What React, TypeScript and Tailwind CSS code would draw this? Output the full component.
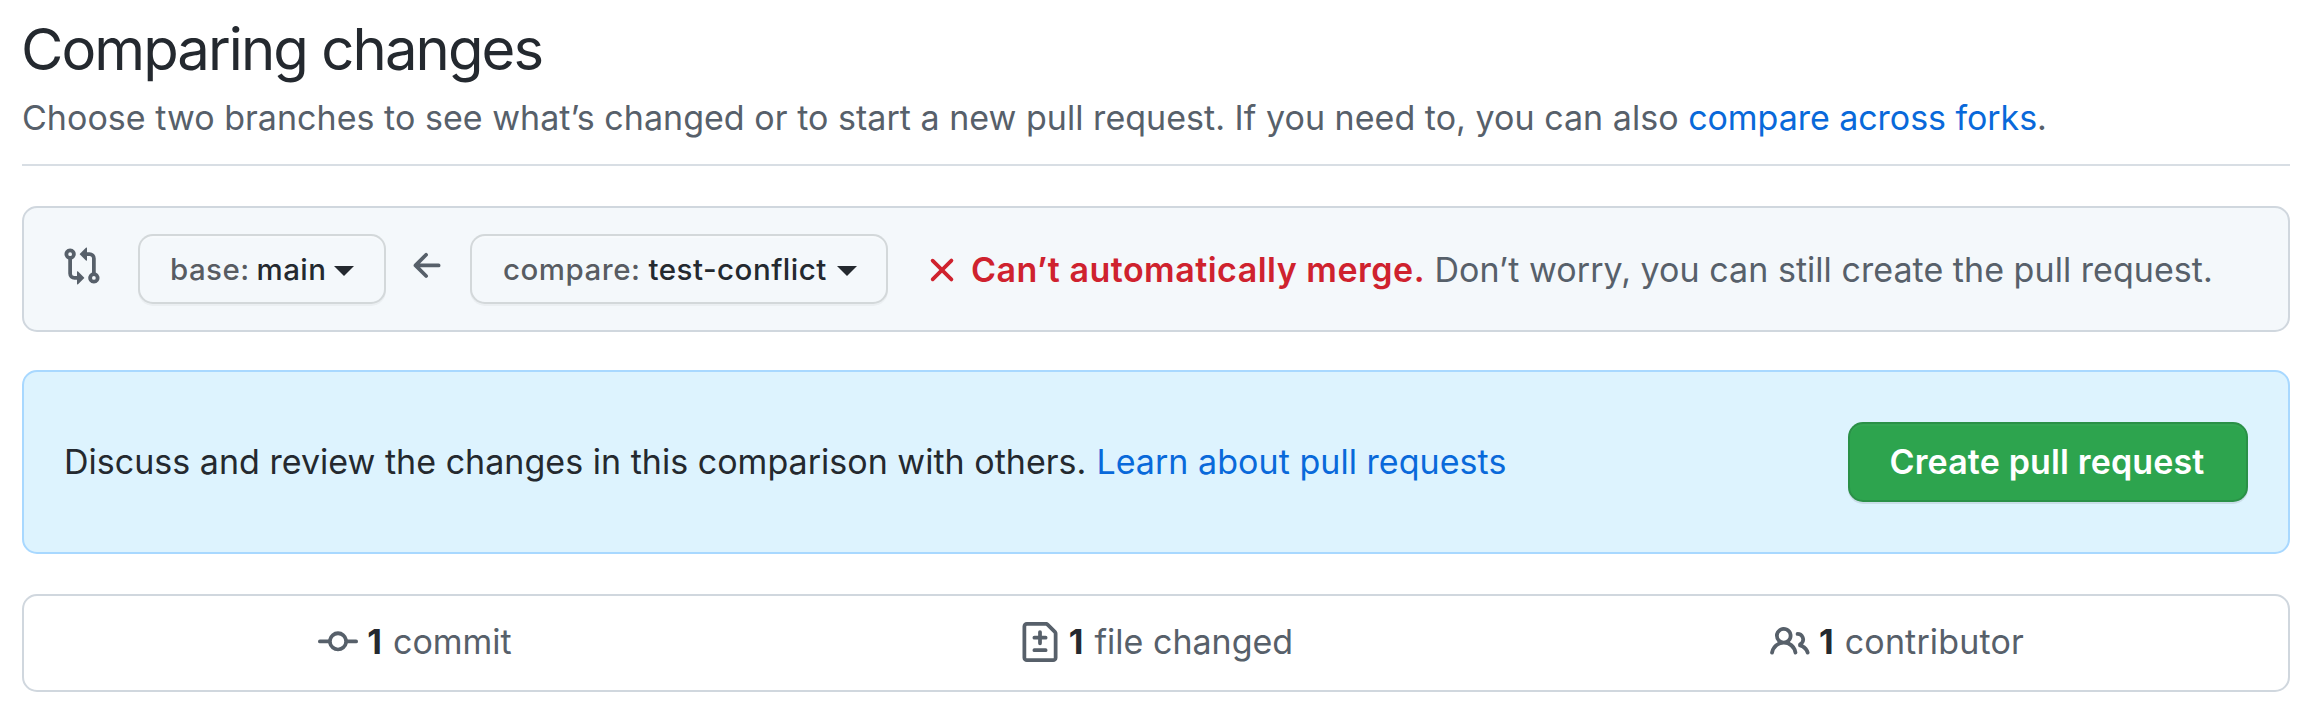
import type { ReactNode } from "react";

const paths = {
  compare:
    "M9.573.677L7.177 3.073a.25.25 0 000 .354l2.396 2.396A.25.25 0 0010 5.646V4h1a1 1 0 011 1v5.628a2.251 2.251 0 101.5 0V5A2.5 2.5 0 0011 2.5h-1V.854a.25.25 0 00-.427-.177zM6 12v-1.646a.25.25 0 01.427-.177l2.396 2.396a.25.25 0 010 .354l-2.396 2.396A.25.25 0 016 15.146V13.5H5A2.5 2.5 0 012.5 11V5.372a2.25 2.25 0 111.5 0V11a1 1 0 001 1h1zM4 3.25a.75.75 0 11-1.5 0 .75.75 0 011.5 0zM12.75 12a.75.75 0 100 1.5.75.75 0 000-1.5z",
  arrowLeft:
    "M7.78 12.53a.75.75 0 01-1.06 0L2.47 8.28a.75.75 0 010-1.06l4.25-4.25a.75.75 0 011.06 1.06L4.81 7h7.44a.75.75 0 010 1.5H4.81l2.97 2.97a.75.75 0 010 1.06z",
  x: "M3.72 3.72a.75.75 0 011.06 0L8 6.94l3.22-3.22a.75.75 0 111.06 1.06L9.06 8l3.22 3.22a.75.75 0 11-1.06 1.06L8 9.06l-3.22 3.22a.75.75 0 01-1.06-1.06L6.94 8 3.72 4.78a.75.75 0 010-1.06z",
  commit:
    "M10.5 7.75a2.5 2.5 0 11-5 0 2.5 2.5 0 015 0zm1.43.75a4.002 4.002 0 01-7.86 0H.75a.75.75 0 110-1.5h3.32a4.001 4.001 0 017.86 0h3.32a.75.75 0 110 1.5h-3.32z",
  fileDiff:
    "M2.75 1.5a.25.25 0 00-.25.25v12.5c0 .138.112.25.25.25h10.5a.25.25 0 00.25-.25V4.664a.25.25 0 00-.073-.177l-2.914-2.914a.25.25 0 00-.177-.073H2.75zM1 1.75C1 .784 1.784 0 2.75 0h7.586c.464 0 .909.184 1.237.513l2.914 2.914c.329.328.513.773.513 1.237v9.586A1.75 1.75 0 0113.25 16H2.75A1.75 1.75 0 011 14.25V1.75zm7 1.5a.75.75 0 01.75.75v1.5h1.5a.75.75 0 010 1.5h-1.5v1.5a.75.75 0 01-1.5 0V7h-1.5a.75.75 0 010-1.5h1.5V4A.75.75 0 018 3.25zm-3 8a.75.75 0 01.75-.75h4.5a.75.75 0 010 1.5h-4.5a.75.75 0 01-.75-.75z",
  people:
    "M5.5 3.5a2 2 0 100 4 2 2 0 000-4zM2 5.5a3.5 3.5 0 115.898 2.549 5.507 5.507 0 013.034 4.084.75.75 0 11-1.482.235 4.001 4.001 0 00-7.9 0 .75.75 0 01-1.482-.236A5.507 5.507 0 013.102 8.05 3.49 3.49 0 012 5.5zM11 4a.75.75 0 100 1.5 1.5 1.5 0 01.666 2.844.75.75 0 00-.416.672v.352a.75.75 0 00.574.73c1.2.289 2.162 1.2 2.522 2.372a.75.75 0 101.434-.44 5.01 5.01 0 00-2.56-3.012A3 3 0 0011 4z",
};

function Icon({ name, className = "" }: { name: keyof typeof paths; className?: string }) {
  return (
    <svg viewBox="0 0 16 16" className={`size-10 shrink-0 ${className}`} fill="currentColor" fillRule="evenodd">
      <path d={paths[name]} />
    </svg>
  );
}

function Caret({ className }: { className: string }) {
  return (
    <svg viewBox="0 0 20 10" className={`mt-1 h-2.5 w-5 shrink-0 ${className}`} fill="currentColor">
      <path d="M0 0h20L10 10z" />
    </svg>
  );
}

function BranchButton({ className, children }: { className: string; children: ReactNode }) {
  return (
    <button
      className={`flex h-[70px] shrink-0 items-center rounded-[15px] border-2 border-[#1b1f24]/15 bg-[#f4f8fb] text-[29.5px] font-medium shadow-[0_2px_0_rgba(27,31,36,0.04),inset_0_2px_0_rgba(255,255,255,0.25)] ${className}`}
    >
      {children}
    </button>
  );
}

function Stat({
  icon,
  label,
  className,
  labelClass = "",
}: {
  icon: keyof typeof paths;
  label: string;
  className: string;
  labelClass?: string;
}) {
  return (
    <div className={`flex items-center justify-center ${className}`}>
      <Icon name={icon} />
      <span className="ml-[9px] font-bold text-[#24292f]">1</span>
      <span className={`ml-[11px] ${labelClass}`}>{label}</span>
    </div>
  );
}

export default function App() {
  return (
    <main className="h-[716px] bg-white pt-3 pr-4 pl-[22px] font-['Inter',sans-serif] text-[34px] leading-[52px] whitespace-nowrap text-[#57606a]">
      <header className="border-b-2 border-[#d8dee4] pb-5">
        <h1 className="-ml-px text-[58px] leading-[74px] tracking-[-1.92px] text-[#24292f]">Comparing changes</h1>
        <p className="mt-1.5 tracking-[0.03px]">
          Choose two branches to see what’s changed or to start a new pull request. If you need to, you can also{" "}
          <a className="tracking-[-0.05px] text-[#0969da]">compare across forks</a>.
        </p>
      </header>

      <section className="mt-10 flex h-[126px] items-center rounded-[15px] border-2 border-[#d0d7de] bg-[#f4f8fb] pl-[38px]">
        <Icon name="compare" className="mb-[7px]" />
        <BranchButton className="ml-9 w-[248px] pl-[30px] tracking-[0.42px]">
          <span className="text-[#24292f]/75">base:</span>
          <span className="ml-[7px] text-[#24292f]">main</span>
          <Caret className="ml-2 text-[#24292f]" />
        </BranchButton>
        <Icon name="arrowLeft" className="mx-[22px] mb-1.5" />
        <BranchButton className="w-[418px] pl-[31px] tracking-[0.5px]">
          <span className="text-[#24292f]/75">compare:</span>
          <span className="ml-2 text-[#24292f]">test-conflict</span>
          <Caret className="ml-2.5 text-[#24292f]" />
        </BranchButton>
        <Icon name="x" className="mt-0.5 ml-[34px] text-[#cf222e]" />
        <strong className="mt-0.5 ml-[9px] font-semibold tracking-[0.49px] text-[#cf222e]">
          Can’t automatically merge.
        </strong>
        <span className="mt-0.5 ml-[9.5px] tracking-[0.04px]">
          Don’t worry, you can still create the pull request.
        </span>
      </section>

      <section className="mt-[38px] flex h-[184px] items-center rounded-[15px] border-2 border-[#a8d8ff] bg-[#ddf3fe] pr-10 pl-10">
        <span className="tracking-[0.02px] text-[#24292f]">
          Discuss and review the changes in this comparison with others.
        </span>
        <a className="ml-2.5 tracking-[0.04px] text-[#0969da]">Learn about pull requests</a>
        <button className="ml-auto h-20 w-[400px] rounded-[15px] border-2 border-[#1b1f24]/15 bg-[#2da44e] pr-0.5 font-semibold tracking-[0.15px] text-white shadow-[0_2px_0_rgba(27,31,36,0.1),inset_0_2px_0_rgba(255,255,255,0.03)]">
          Create pull request
        </button>
      </section>

      <section className="mt-10 flex h-[98px] items-center rounded-[15px] border-2 border-[#d0d7de] pb-0.5">
        <Stat icon="commit" label="commit" className="w-[782px]" />
        <Stat icon="fileDiff" label="file changed" className="flex-1 pl-px" />
        <Stat icon="people" label="contributor" className="w-[782px]" labelClass="tracking-[0.15px]" />
      </section>
    </main>
  );
}
